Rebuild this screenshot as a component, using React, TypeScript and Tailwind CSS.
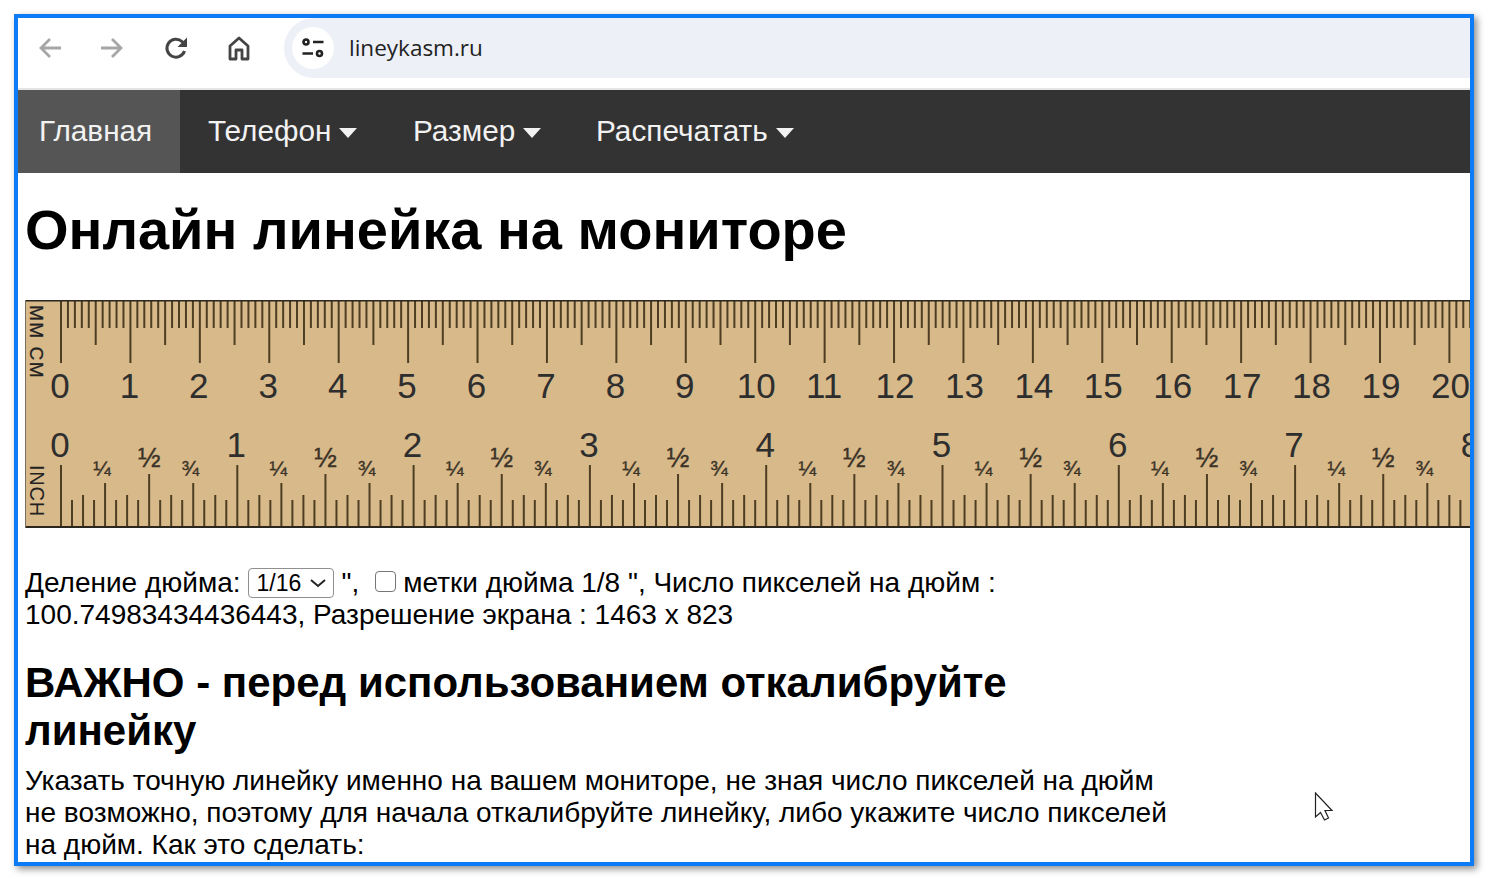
const cmCount = 21;
const cmStep = 69.42;
const inchStep = 176.3;
const x0 = 36;

function CmRuler() {
  const mm = Array.from({ length: 205 }, (_, i) => i);
  return (
    <g>
      {mm.map((i) => {
        const x = x0 + (i * cmStep) / 10;
        const end = i % 10 === 0 ? 63 : i % 5 === 0 ? 45 : 28;
        return <line key={i} x1={x} x2={x} y1={0} y2={end} stroke="#4d3d22" strokeWidth={2} />;
      })}
      {Array.from({ length: cmCount }, (_, i) => (
        <text key={i} x={x0 + i * cmStep + (i < 10 ? -1 : i === 11 ? -0.5 : 1)} y={97.5} textAnchor="middle" fontSize={35} fill="#2e2e2e">
          {i}
        </text>
      ))}
    </g>
  );
}

function InchRuler() {
  const ticks = Array.from({ length: 132 }, (_, i) => i);
  const fractions = ["¼", "½", "¾"];
  return (
    <g>
      {ticks.map((i) => {
        const x = x0 + (i * inchStep) / 16;
        const top = i % 16 === 0 ? 165 : i % 8 === 0 ? 174 : i % 4 === 0 ? 183 : i % 2 === 0 ? 195 : 200;
        return <line key={i} x1={x} x2={x} y1={top} y2={228} stroke="#4d3d22" strokeWidth={2} />;
      })}
      {Array.from({ length: 9 }, (_, i) => (
        <text key={i} x={x0 + i * inchStep - 1} y={157} textAnchor="middle" fontSize={35} fill="#2e2e2e">
          {i}
        </text>
      ))}
      {Array.from({ length: 8 }, (_, i) =>
        fractions.map((f, j) => (
          <text
            key={f}
            x={x0 + (i + (j + 1) / 4) * inchStep - (j === 1 ? 0 : 3)}
            y={j === 1 ? 167 : 175}
            textAnchor="middle"
            fontSize={j === 1 ? 27 : 21}
            fill="#3a3226"
            stroke="#3a3226"
            strokeWidth={0.4}
          >
            {f}
          </text>
        )),
      )}
    </g>
  );
}

function Ruler() {
  return (
    <svg width={1445} height={228} viewBox="0 0 1445 228" className="block shrink-0">
      <rect width={1445} height={228} fill="#d8b98a" />
      <CmRuler />
      <InchRuler />
      <line x1={0} x2={1445} y1={0.7} y2={0.7} stroke="#2b261e" strokeWidth={1.6} />
      <line x1={0} x2={1445} y1={227} y2={227} stroke="#2b261e" strokeWidth={2} />
      <line x1={0.5} x2={0.5} y1={0} y2={228} stroke="#77705f" strokeWidth={1} />
      <text transform="translate(5 5) rotate(90)" fontSize={19} fill="#222" letterSpacing={1.5} stroke="#222" strokeWidth={0.3}>
        MM CM
      </text>
      <text transform="translate(5 165) rotate(90)" fontSize={20} fill="#222" letterSpacing={0.8}>
        INCH
      </text>
    </svg>
  );
}

function NavCaret() {
  return <span className="ml-[8px] inline-block h-0 w-0 border-x-[9px] border-t-[10px] border-x-transparent border-t-[#f2f2f2] align-[3px]" />;
}

function Toolbar() {
  return (
    <div className="flex h-[70px] shrink-0 items-start bg-white">
      <div className="flex h-[60px] w-[266px] shrink-0 items-center">
        <svg className="ml-[20px]" width="24" height="24" viewBox="0 0 24 24" fill="none" stroke="#a6a6a6" strokeWidth="2.800">
          <path d="M23 12H3M12 3 3 12l9 9" />
        </svg>
        <svg className="ml-[38px]" width="24" height="24" viewBox="0 0 24 24" fill="none" stroke="#a6a6a6" strokeWidth="2.800">
          <path d="M1 12h20M12 3l9 9-9 9" />
        </svg>
        <svg className="ml-[40px]" width="24" height="24" viewBox="0 0 24 24" fill="none" stroke="#444" strokeWidth="3">
          <path d="M20.500 15A9 9 0 1 1 18 5.500L21 8.500" />
          <path d="M23 1.500V11h-9.500z" fill="#444" stroke="none" />
        </svg>
        <svg className="ml-[39px]" width="24" height="26" viewBox="0 0 24 26" fill="none" stroke="#444" strokeWidth="2.800" strokeLinejoin="round">
          <path d="M3 24V11l9-8 9 8v13h-6v-9H9v9z" />
        </svg>
      </div>
      <div className="flex h-[60px] flex-1 items-center rounded-l-[30px] bg-[#edf0f7] pl-[8px]">
        <div className="flex h-[42px] w-[42px] items-center justify-center rounded-full bg-white">
          <svg width="22" height="20" viewBox="0 0 22 20" fill="none" stroke="#222" strokeWidth="2.600">
            <circle cx="4" cy="4" r="2.500" />
            <path d="M11 4h10.500M0.500 15.500H11" />
            <circle cx="17.500" cy="15.500" r="2.500" />
          </svg>
        </div>
        <span className="ml-[15px] font-['Open_Sans',sans-serif] text-[22.500px] text-[#222]">lineykasm.ru</span>
      </div>
    </div>
  );
}

function Navbar() {
  return (
    <div className="flex h-[83px] shrink-0 items-center bg-[#333] text-[29.750px] text-[#f2f2f2]">
      <div className="flex h-full w-[162px] items-center bg-[#555] pl-[21px]">Главная</div>
      <div className="ml-[28px] w-[205px] shrink-0">
        Телефон
        <NavCaret />
      </div>
      <div className="w-[183px] shrink-0">
        Размер
        <NavCaret />
      </div>
      <div className="shrink-0">
        Распечатать
        <NavCaret />
      </div>
    </div>
  );
}

function Content() {
  return (
    <div className="flex flex-col pl-[7px] text-black">
      <h1 className="mt-[26px] h-[101px] whitespace-nowrap text-[56px] font-bold leading-[62px]">Онлайн линейка на мониторе</h1>
      <Ruler />
      <div className="mt-[39px] w-[1000px] text-[28px] leading-[32px]">
        <div className="flex items-center whitespace-nowrap">
          Деление дюйма:
          <span className="ml-[7px] flex h-[30px] w-[86px] items-center rounded-[4px] border border-[#8f8f8f] pl-[8px] text-[23px]">
            1/16
            <svg className="ml-[8px]" width="18" height="10" viewBox="0 0 18 10" fill="none" stroke="#222" strokeWidth="2">
              <path d="M2 2l7 6 7-6" />
            </svg>
          </span>
          <span className="ml-[8px]">",</span>
          <span className="mb-[4px] ml-[16px] h-[21px] w-[21px] rounded-[4px] border-[1.500px] border-[#767676] bg-white" />
          <span className="ml-[7px]">метки дюйма 1/8 ", Число пикселей на дюйм :</span>
        </div>
        <div className="whitespace-nowrap">100.74983434436443, Разрешение экрана : 1463 x 823</div>
      </div>
      <h2 className="mt-[28px] w-[1100px] text-[42px] font-bold leading-[48px]">
        ВАЖНО - перед использованием откалибруйте
        <br />
        линейку
      </h2>
      <p className="mt-[10px] whitespace-nowrap text-[28px] leading-[32px]">
        Указать точную линейку именно на вашем мониторе, не зная число пикселей на дюйм
        <br />
        не возможно, поэтому для начала откалибруйте линейку, либо укажите число пикселей
        <br />
        на дюйм. Как это сделать:
      </p>
    </div>
  );
}

export default function App() {
  return (
    <div className="h-[879px] w-[1488px] overflow-hidden bg-white pl-[14px] pt-[14px] font-['Liberation_Sans',Arial,sans-serif]">
      <div className="relative flex h-[852px] w-[1460px] flex-col overflow-hidden border-[4px] border-[#0b7cf5] bg-white shadow-[3px_3px_7px_rgba(0,0,0,0.45)]">
        <Toolbar />
        <div className="h-[2px] shrink-0 bg-[#e4e4e4]" />
        <Navbar />
        <Content />
        <svg className="absolute left-[1296px] top-[774px]" width="20" height="30" viewBox="0 0 20 30" fill="white" stroke="#222" strokeWidth="1.200">
          <path d="M1.500 1v24l5-4.500 4 7.500 4-2-3.500-7.500h7z" />
        </svg>
      </div>
    </div>
  );
}
